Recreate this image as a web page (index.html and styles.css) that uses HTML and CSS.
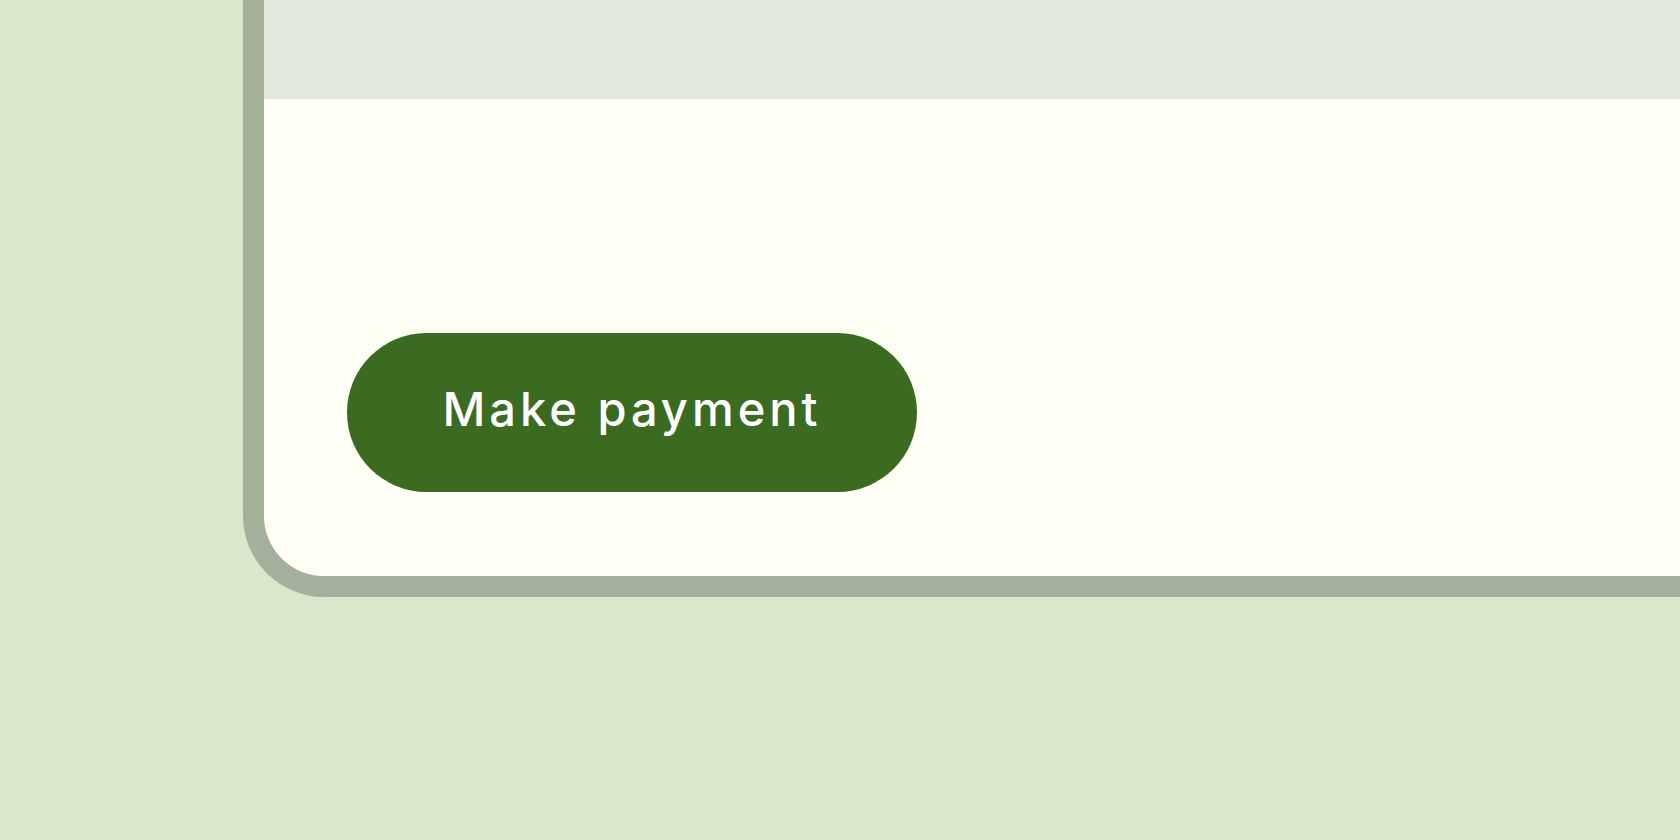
FILE: index.html
```html
<!DOCTYPE html>
<html>
<head>
<meta charset="utf-8">
<link rel="stylesheet" href="styles.css">
</head>
<body>
<div class="stage">
  <div class="frame">
    <div class="topbar"></div>
    <div class="content">
      <button class="pay-btn">Make payment</button>
    </div>
  </div>
</div>
</body>
</html>
```
FILE: styles.css
```css
html, body {
  margin: 0;
  padding: 0;
  width: 1680px;
  height: 840px;
  overflow: hidden;
  background: #dbe7cb;
}
.stage {
  display: flex;
  padding-left: 243px;
}
.frame {
  flex: 1;
  display: flex;
  flex-direction: column;
  border-left: 21px solid #a5b09c;
  border-bottom: 21px solid #a5b09c;
  border-bottom-left-radius: 81px;
  background: #fefef4;
  overflow: hidden;
}
.topbar {
  height: 99px;
  background: #e2e8dc;
}
.content {
  display: flex;
  padding: 234px 0 84px 83px;
}
.pay-btn {
  width: 570px;
  height: 159px;
  border: none;
  border-radius: 80px;
  background: #3a6b20;
  color: #ffffff;
  font-family: Inter, "Open Sans", sans-serif;
  font-size: 47px;
  font-weight: 500;
  letter-spacing: 4px;
  padding: 0 0 8px 0;
  cursor: pointer;
}
```
